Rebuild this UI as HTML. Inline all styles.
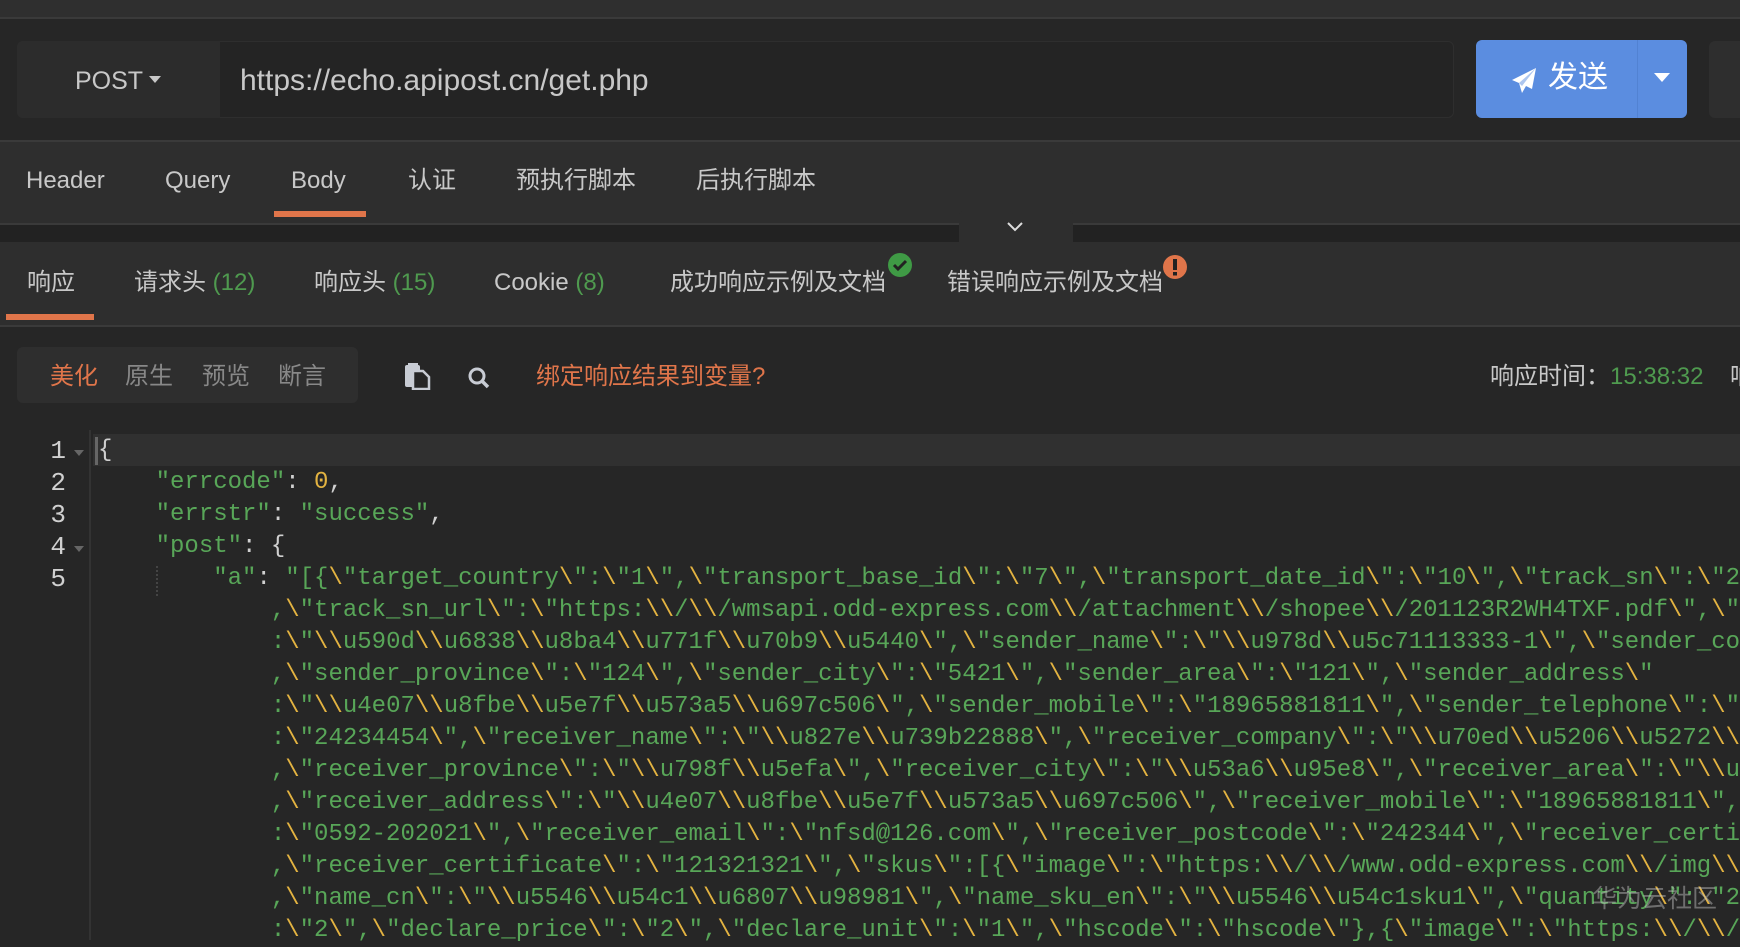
<!DOCTYPE html>
<html><head><meta charset="utf-8"><style>
*{margin:0;padding:0;box-sizing:border-box}
body{width:1740px;height:940px;overflow:hidden;background:#262626;font-family:"Liberation Sans","Noto Sans CJK SC",sans-serif;position:relative;color:#c8c8c8}
.a{position:absolute}
.t{position:absolute;white-space:nowrap;font-size:24px;line-height:30px}
.g{color:#4f9a4f}
.code{position:absolute;left:98px;top:435px;font-family:"Liberation Mono",monospace;font-size:24px;line-height:32px;white-space:pre;color:#58a658}
.code div{height:32px}
.w{color:#d0d0d0}.y{color:#e3b341}
.ln{position:absolute;left:0;width:66px;text-align:right;font-family:"Liberation Mono",monospace;font-size:26px;line-height:32px;color:#d0d0d0;top:435px}
</style></head><body>
<div class="a" style="left:0;top:0;width:1740px;height:19px;background:#2f2f2f;border-bottom:2px solid #3a3a3a"></div>
<div class="a" style="left:0;top:21px;width:1740px;height:119px;background:#262626"></div>
<div class="a" style="left:17px;top:41px;width:1437px;height:77px;background:#242424;border:1px solid #2e2e2e;border-radius:6px"></div>
<div class="a" style="left:17px;top:41px;width:203px;height:77px;background:#2c2c2c;border-radius:6px 0 0 6px"></div>
<div class="t" style="left:75px;top:66px;font-size:25px;color:#c8c8c8">POST<span style="display:inline-block;margin-left:6px;border-left:6px solid transparent;border-right:6px solid transparent;border-top:7px solid #c8c8c8;vertical-align:middle;position:relative;top:-3px"></span></div>
<div class="t" style="left:240px;top:64px;font-size:30px;line-height:34px;color:#c8c8c8">https://echo.apipost.cn/get.php</div>
<div class="a" style="left:1476px;top:40px;width:211px;height:78px;background:#5b8de0;border-radius:6px"></div>
<div class="a" style="left:1637px;top:40px;width:1px;height:78px;background:#5282d2"></div>
<svg class="a" style="left:1510px;top:66px" width="28" height="28" viewBox="0 0 28 28"><path d="M26 2L2 14l7 3 3 10 4-7 6 3z" fill="#fff"/><path d="M9 17L26 2 12 20z" fill="#5b8de0" opacity=".5"/></svg>
<div class="t" style="left:1548px;top:61px;font-size:30px;line-height:34px;color:#fff">发送</div>
<div class="a" style="left:1654px;top:73px;border-left:8px solid transparent;border-right:8px solid transparent;border-top:9px solid #fff"></div>
<div class="a" style="left:1709px;top:41px;width:40px;height:77px;background:#2e2e2e;border-radius:6px"></div>
<div class="a" style="left:0;top:140px;width:1740px;height:85px;background:#2e2e2e;border-top:2px solid #3a3a3a;border-bottom:2px solid #3a3a3a"></div>
<div class="t" style="left:26px;top:166px">Header</div>
<div class="t" style="left:165px;top:166px">Query</div>
<div class="t" style="left:291px;top:166px">Body</div>
<div class="t" style="left:408px;top:166px">认证</div>
<div class="t" style="left:516px;top:166px">预执行脚本</div>
<div class="t" style="left:696px;top:166px">后执行脚本</div>
<div class="a" style="left:274px;top:211px;width:92px;height:6px;background:#e0754a"></div>
<div class="a" style="left:0;top:225px;width:1740px;height:17px;background:#222"></div>
<div class="a" style="left:959px;top:211px;width:114px;height:31px;background:#2e2e2e;border-radius:4px 4px 0 0"></div>
<svg class="a" style="left:1006px;top:221px" width="18" height="12"><path d="M2 2l7 7 7-7" stroke="#ddd" stroke-width="2" fill="none"/></svg>
<div class="a" style="left:0;top:242px;width:1740px;height:85px;background:#2e2e2e;border-bottom:2px solid #3a3a3a"></div>
<div class="t" style="left:27px;top:268px">响应</div>
<div class="t" style="left:134px;top:268px">请求头 <span class="g">(12)</span></div>
<div class="t" style="left:314px;top:268px">响应头 <span class="g">(15)</span></div>
<div class="t" style="left:494px;top:268px">Cookie <span class="g">(8)</span></div>
<div class="t" style="left:670px;top:268px">成功响应示例及文档</div>
<div class="t" style="left:947px;top:268px">错误响应示例及文档</div>
<svg class="a" style="left:888px;top:253px" width="24" height="24"><circle cx="12" cy="12" r="12" fill="#3f9a45"/><path d="M6 12l4 4 8-8" stroke="#222" stroke-width="3" fill="none"/></svg>
<svg class="a" style="left:1163px;top:254px" width="24" height="26"><circle cx="12" cy="13" r="12" fill="#e0754a"/><rect x="10" y="5" width="4" height="11" fill="#222"/><rect x="10" y="18" width="4" height="3.5" fill="#222"/></svg>
<div class="a" style="left:6px;top:314px;width:88px;height:6px;background:#e0754a"></div>
<div class="a" style="left:17px;top:347px;width:341px;height:56px;background:#2e2e2e;border-radius:6px"></div>
<div class="t" style="left:50px;top:362px;color:#e0754a">美化</div>
<div class="t" style="left:125px;top:362px;color:#888">原生</div>
<div class="t" style="left:202px;top:362px;color:#888">预览</div>
<div class="t" style="left:278px;top:362px;color:#888">断言</div>
<svg class="a" style="left:404px;top:362px" width="28" height="28"><rect x="1" y="3" width="15" height="22" rx="2" fill="#c8ccd4"/><path d="M9 9h10l6 6v12H9z" fill="#262626" stroke="#c8ccd4" stroke-width="2.5"/><rect x="4" y="1" width="10" height="3" fill="#c8ccd4"/></svg>
<svg class="a" style="left:467px;top:366px" width="24" height="24"><circle cx="10" cy="10" r="7" stroke="#c8ccd4" stroke-width="3" fill="none"/><path d="M15 15l6 6" stroke="#c8ccd4" stroke-width="3.5"/></svg>
<div class="t" style="left:536px;top:362px;color:#e0754a">绑定响应结果到变量?</div>
<div class="t" style="left:1490px;top:362px">响应时间：<span class="g">15:38:32</span></div>
<div class="t" style="left:1730px;top:362px">响</div>
<div class="a" style="left:0;top:430px;width:91px;height:510px;background:#262626;border-right:2px solid #333"></div>
<div class="a" style="left:93px;top:434px;width:1647px;height:32px;background:#303030"></div>
<div class="a" style="left:95px;top:437px;width:3px;height:28px;background:#666"></div>
<div class="a" style="left:156px;top:566px;height:30px;border-left:2px dotted #444"></div>
<div class="ln"><div>1</div><div>2</div><div>3</div><div>4</div><div>5</div></div>
<div class="a" style="left:74px;top:450px;border-left:5px solid transparent;border-right:5px solid transparent;border-top:6px solid #666"></div>
<div class="a" style="left:74px;top:546px;border-left:5px solid transparent;border-right:5px solid transparent;border-top:6px solid #666"></div>
<div class="code" id="c"><div class="w">{</div><div>    "errcode"<span class="w">: </span><span class="y">0</span><span class="w">,</span></div><div>    "errstr"<span class="w">: </span>"success"<span class="w">,</span></div><div>    "post"<span class="w">: {</span></div><div class="x">        "a"<span class="w">: </span>"[{\"target_country\":\"1\",\"transport_base_id\":\"7\",\"transport_date_id\":\"10\",\"track_sn\":\"2</div><div class="x">            ,\"track_sn_url\":\"https:\\/\\/wmsapi.odd-express.com\\/attachment\\/shopee\\/201123R2WH4TXF.pdf\",\"</div><div class="x">            :\"\\u590d\\u6838\\u8ba4\\u771f\\u70b9\\u5440\",\"sender_name\":\"\\u978d\\u5c71113333-1\",\"sender_co</div><div class="x">            ,\"sender_province\":\"124\",\"sender_city\":\"5421\",\"sender_area\":\"121\",\"sender_address\"</div><div class="x">            :\"\\u4e07\\u8fbe\\u5e7f\\u573a5\\u697c506\",\"sender_mobile\":\"18965881811\",\"sender_telephone\":\"</div><div class="x">            :\"24234454\",\"receiver_name\":\"\\u827e\\u739b22888\",\"receiver_company\":\"\\u70ed\\u5206\\u5272\\</div><div class="x">            ,\"receiver_province\":\"\\u798f\\u5efa\",\"receiver_city\":\"\\u53a6\\u95e8\",\"receiver_area\":\"\\u</div><div class="x">            ,\"receiver_address\":\"\\u4e07\\u8fbe\\u5e7f\\u573a5\\u697c506\",\"receiver_mobile\":\"18965881811\",</div><div class="x">            :\"0592-202021\",\"receiver_email\":\"nfsd@126.com\",\"receiver_postcode\":\"242344\",\"receiver_certi</div><div class="x">            ,\"receiver_certificate\":\"121321321\",\"skus\":[{\"image\":\"https:\\/\\/www.odd-express.com\\/img\\</div><div class="x">            ,\"name_cn\":\"\\u5546\\u54c1\\u6807\\u98981\",\"name_sku_en\":\"\\u5546\\u54c1sku1\",\"quantity\":\"2</div><div class="x">            :\"2\",\"declare_price\":\"2\",\"declare_unit\":\"1\",\"hscode\":\"hscode\"},{\"image\":\"https:\\/\\/</div></div>
<div class="t" style="left:1592px;top:884px;font-size:25px;color:rgba(200,200,200,.45)">华为云社区</div>
<script>
document.querySelectorAll('.x').forEach(function(d){d.innerHTML=d.innerHTML.replace(/\\/g,'<span class="y">\\</span>');});
</script>
</body></html>
